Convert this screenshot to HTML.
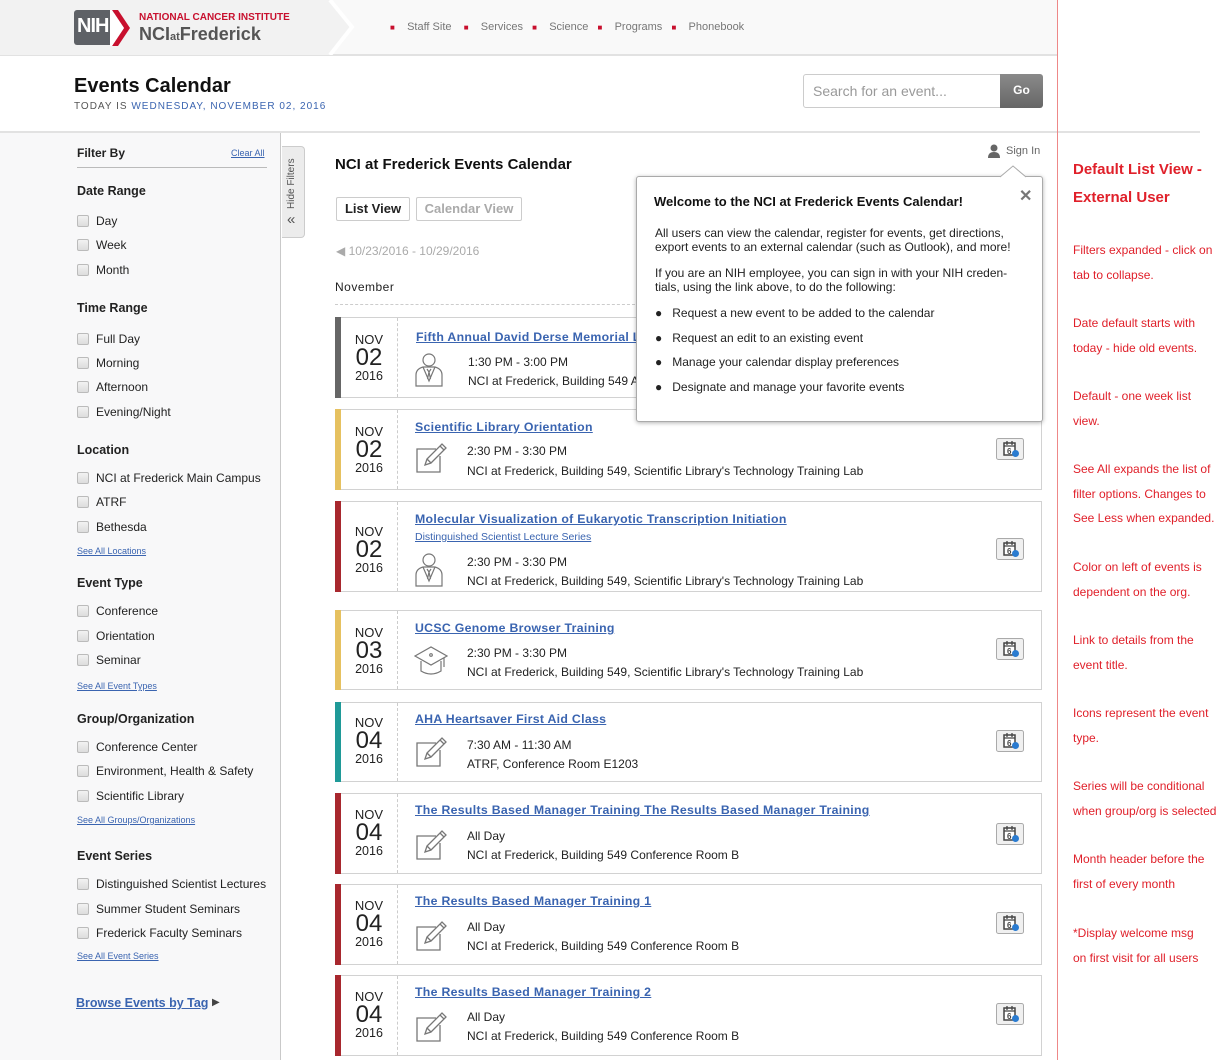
<!DOCTYPE html>
<html><head><meta charset="utf-8">
<style>
*{margin:0;padding:0;box-sizing:border-box}
body{width:1220px;height:1060px;overflow:hidden;background:#fff;font-family:"Liberation Sans",Arial,sans-serif;color:#222;position:relative}
.a{position:absolute;white-space:nowrap}
.sb{position:absolute;left:0;top:133px;width:281px;height:927px;background:#f8f8f9;border-right:1px solid #c9c9c9}
.h{font-size:12.5px;font-weight:bold;color:#222;left:77px;line-height:16px}
.cb{left:77px;width:12px;height:12px;border:1px solid #bbb;border-radius:2px;background:linear-gradient(#f2f2f2,#ddd)}
.cl{left:96px;font-size:12px;line-height:16px;color:#222}
.sa{left:77px;font-size:9px;color:#3a64b0;text-decoration:underline;line-height:12px}
.card{position:absolute;left:335px;width:707px;border:1px solid #d2d2d2;border-left:none;background:#fff}
.bar{position:absolute;left:0;top:-1px;bottom:-1px;width:6px}
.dt{position:absolute;left:6px;top:0;bottom:0;width:57px;border-right:1px dashed #ccc;text-align:center;color:#222}
.dt div:nth-child(2){font-size:24px!important;line-height:22px!important}
.ttl{font-size:12.3px;font-weight:bold;color:#3a64b0;text-decoration:underline;letter-spacing:.3px}
.tx{font-size:12px;color:#222}
.ic{position:absolute;left:79px}
.cal{position:absolute;left:661px;width:28px;height:22px}
.an{left:1073px;font-size:12px;color:#e0202a;line-height:24.5px}
</style></head><body>
<svg width="0" height="0" style="position:absolute">
<defs>
<symbol id="per" viewBox="0 0 30 34"><g fill="none" stroke="#777" stroke-width="1.2"><circle cx="15" cy="7" r="6"/><path d="M2 33V22q0-6 7-8h12q7 2 7 8v11z"/><path d="M9 14l6 14 6-14M13 16l2 3 2-3M15 19l-1.5 7M15 19l1.5 7"/></g></symbol>
<symbol id="edt" viewBox="0 0 34 32"><g fill="none" stroke="#777" stroke-width="1.3"><path d="M22 7H3v23h23V14"/><path d="M11 23l2-6 15-15 4 4-15 15z"/><path d="M13 17l4 4M26 4l4 4"/></g></symbol>
<symbol id="cap" viewBox="0 0 34 32"><g fill="none" stroke="#777" stroke-width="1.2"><path d="M1 12L17 3l16 9-16 9z"/><circle cx="17" cy="11" r="1.3"/><path d="M7 17v10q10 6 20 0V17"/><path d="M30 14v9"/></g></symbol>
<symbol id="cal" viewBox="0 0 28 22"><rect x="0.5" y="0.5" width="27" height="21" rx="2" fill="#f0f0f0" stroke="#aaa"/><rect x="8" y="5" width="11" height="12" fill="#fff" stroke="#444" stroke-width="1.5"/><path d="M8 8h11M11 3v4M16 3v4" stroke="#444" stroke-width="1.3"/><text x="11" y="16" font-size="8" font-family="Liberation Sans" font-weight="bold" fill="#444">6</text><circle cx="19.5" cy="15.5" r="3.5" fill="#2a7bd0"/></symbol>
</defs></svg>

<!-- header -->
<div class="a" style="left:0;top:0;width:1057px;height:56px;background:#f9f9f9;border-bottom:2px solid #e2e2e2"></div>
<svg class="a" style="left:0;top:0" width="360" height="55"><path d="M0 0H330L352 27 330 55H0z" fill="#f2f2f2"/><path d="M330 0L352 27 330 55" fill="none" stroke="#fff" stroke-width="4"/></svg>
<div class="a" style="left:74px;top:10px;width:40px;height:35px;background:#5e6166;border-radius:3px"></div>
<svg class="a" style="left:110px;top:8px" width="22" height="40"><path d="M2 2h6l12 18-12 18H2l12-18z" fill="#c8102e"/><path d="M0 2h2l12 18L2 38H0z" fill="#fff"/></svg>
<div class="a" style="left:77px;top:15px;font-size:20px;font-weight:bold;color:#fff;letter-spacing:-1px">NIH</div>
<div class="a" style="left:139px;top:12px;font-size:10px;font-weight:bold;color:#c8102e">NATIONAL CANCER INSTITUTE</div>
<div class="a" style="left:139px;top:24px;font-size:18px;font-weight:bold;color:#555">NCI<span style="font-size:11px">at</span>Frederick</div>
<div class="a" style="left:390px;top:21px;font-size:11px;color:#777">
<span style="color:#c8102e;font-size:8px">■</span>&nbsp;&nbsp;&nbsp; Staff Site &nbsp;&nbsp;&nbsp;<span style="color:#c8102e;font-size:8px">■</span>&nbsp;&nbsp;&nbsp; Services &nbsp;&nbsp;<span style="color:#c8102e;font-size:8px">■</span>&nbsp;&nbsp;&nbsp; Science &nbsp;&nbsp;<span style="color:#c8102e;font-size:8px">■</span>&nbsp;&nbsp;&nbsp; Programs &nbsp;&nbsp;<span style="color:#c8102e;font-size:8px">■</span>&nbsp;&nbsp;&nbsp; Phonebook</div>

<div class="a" style="left:74px;top:75px;font-size:20px;font-weight:bold;color:#111">Events Calendar</div>
<div class="a" style="left:74px;top:101px;font-size:10px;color:#555;letter-spacing:1px">TODAY IS <span style="color:#3a64b0">WEDNESDAY, NOVEMBER 02, 2016</span></div>
<div class="a" style="left:803px;top:74px;width:198px;height:34px;border:1px solid #ccc;border-radius:3px 0 0 3px;font-size:14px;color:#999;padding:8px 9px">Search for an event...</div>
<div class="a" style="left:1000px;top:74px;width:43px;height:34px;background:linear-gradient(#8a8a8a,#666);border-radius:0 3px 3px 0;color:#fff;font-size:12px;font-weight:bold;text-align:center;line-height:32px">Go</div>
<div class="a" style="left:0;top:131px;width:1200px;height:2px;background:#e2e2e2"></div>
<div class="a" style="left:1057px;top:0;width:1px;height:1060px;background:#e88"></div>

<!-- sidebar -->
<div class="sb"></div>
<div class="a h" style="left:77px;top:145px;font-size:12px">Filter By</div>
<div class="a" style="left:231px;top:148px;font-size:9px;color:#3a64b0;text-decoration:underline">Clear All</div>
<div class="a" style="left:77px;top:167px;width:190px;height:1px;background:#bbb"></div>
<div class="a h" style="top:183px">Date Range</div>
<div class="a cb" style="top:215px"></div><div class="a cl" style="top:213px">Day</div>
<div class="a cb" style="top:239px"></div><div class="a cl" style="top:237px">Week</div>
<div class="a cb" style="top:264px"></div><div class="a cl" style="top:262px">Month</div>
<div class="a h" style="top:300px">Time Range</div>
<div class="a cb" style="top:333px"></div><div class="a cl" style="top:331px">Full Day</div>
<div class="a cb" style="top:357px"></div><div class="a cl" style="top:355px">Morning</div>
<div class="a cb" style="top:381px"></div><div class="a cl" style="top:379px">Afternoon</div>
<div class="a cb" style="top:406px"></div><div class="a cl" style="top:404px">Evening/Night</div>
<div class="a h" style="top:442px">Location</div>
<div class="a cb" style="top:472px"></div><div class="a cl" style="top:470px">NCI at Frederick Main Campus</div>
<div class="a cb" style="top:496px"></div><div class="a cl" style="top:494px">ATRF</div>
<div class="a cb" style="top:521px"></div><div class="a cl" style="top:519px">Bethesda</div>
<div class="a sa" style="top:545px">See All Locations</div>
<div class="a h" style="top:575px">Event Type</div>
<div class="a cb" style="top:605px"></div><div class="a cl" style="top:603px">Conference</div>
<div class="a cb" style="top:630px"></div><div class="a cl" style="top:628px">Orientation</div>
<div class="a cb" style="top:654px"></div><div class="a cl" style="top:652px">Seminar</div>
<div class="a sa" style="top:680px">See All Event Types</div>
<div class="a h" style="top:711px">Group/Organization</div>
<div class="a cb" style="top:741px"></div><div class="a cl" style="top:739px">Conference Center</div>
<div class="a cb" style="top:765px"></div><div class="a cl" style="top:763px">Environment, Health &amp; Safety</div>
<div class="a cb" style="top:790px"></div><div class="a cl" style="top:788px">Scientific Library</div>
<div class="a sa" style="top:814px">See All Groups/Organizations</div>
<div class="a h" style="top:848px">Event Series</div>
<div class="a cb" style="top:878px"></div><div class="a cl" style="top:876px">Distinguished Scientist Lectures</div>
<div class="a cb" style="top:903px"></div><div class="a cl" style="top:901px">Summer Student Seminars</div>
<div class="a cb" style="top:927px"></div><div class="a cl" style="top:925px">Frederick Faculty Seminars</div>
<div class="a sa" style="top:950px">See All Event Series</div>
<div class="a" style="left:76px;top:996px;font-size:12.5px;font-weight:bold;color:#3a64b0;text-decoration:underline">Browse Events by Tag</div>
<div class="a" style="left:212px;top:997px;font-size:10px;color:#444">▶</div>
<!-- tab -->
<div class="a" style="left:282px;top:146px;width:23px;height:92px;background:#ececec;border:1px solid #ccc;border-left:none;border-radius:0 4px 4px 0"></div>
<div class="a" style="left:286px;top:209px;font-size:10px;color:#555;transform:rotate(-90deg);transform-origin:0 0">Hide Filters</div>
<div class="a" style="left:287px;top:211px;font-size:15px;color:#555">«</div>

<!-- main -->
<div class="a" style="left:335px;top:156px;font-size:15px;font-weight:bold;color:#111">NCI at Frederick Events Calendar</div>
<div class="a" style="left:336px;top:197px;width:74px;height:24px;border:1px solid #ccc;border-radius:2px;font-size:13px;font-weight:bold;text-align:center;line-height:22px">List View</div>
<div class="a" style="left:416px;top:197px;width:106px;height:24px;border:1px solid #ccc;border-radius:2px;font-size:13px;font-weight:bold;color:#aaa;text-align:center;line-height:22px">Calendar View</div>
<div class="a" style="left:336px;top:244px;font-size:12px;color:#aaa">◀ 10/23/2016 - 10/29/2016</div>
<div class="a" style="left:335px;top:280px;font-size:12px;color:#222;letter-spacing:.5px">November</div>
<div class="a" style="left:335px;top:304px;width:300px;border-top:1px dashed #ccc"></div>
<svg class="a" style="left:988px;top:144px" width="12" height="14"><circle cx="6" cy="4" r="3.5" fill="#666"/><path d="M0 14q0-6 6-6t6 6z" fill="#666"/></svg>
<div class="a" style="left:1006px;top:145px;font-size:11px;color:#666">Sign In</div>

<!-- cards -->
<div class="card" style="top:317px;height:81px"><div class="bar" style="background:#666"></div>
<div class="dt"><div style="font-size:13px;margin-top:14px">NOV</div><div>02</div><div style="font-size:12.5px">2016</div></div>
<div class="a ttl" style="left:81px;top:12px">Fifth Annual David Derse Memorial Lecture</div>
<svg class="ic" style="top:35px" width="30" height="34"><use href="#per"/></svg>
<div class="a tx" style="left:133px;top:37px">1:30 PM - 3:00 PM</div>
<div class="a tx" style="left:133px;top:56px">NCI at Frederick, Building 549 Auditorium</div></div>

<div class="card" style="top:409px;height:81px"><div class="bar" style="background:#e6c160"></div>
<div class="dt"><div style="font-size:13px;margin-top:14px">NOV</div><div>02</div><div style="font-size:12.5px">2016</div></div>
<div class="a ttl" style="left:80px;top:10px">Scientific Library Orientation</div>
<svg class="ic" style="top:32px" width="34" height="32"><use href="#edt"/></svg>
<div class="a tx" style="left:132px;top:34px">2:30 PM - 3:30 PM</div>
<div class="a tx" style="left:132px;top:54px">NCI at Frederick, Building 549, Scientific Library's Technology Training Lab</div>
<svg class="cal" style="top:28px"><use href="#cal"/></svg></div>

<div class="card" style="top:501px;height:91px"><div class="bar" style="background:#a8282e"></div>
<div class="dt"><div style="font-size:13px;margin-top:22px">NOV</div><div>02</div><div style="font-size:12.5px">2016</div></div>
<div class="a ttl" style="left:80px;top:10px">Molecular Visualization of Eukaryotic Transcription Initiation</div>
<div class="a" style="left:80px;top:29px;font-size:10.5px;color:#3a64b0;text-decoration:underline">Distinguished Scientist Lecture Series</div>
<svg class="ic" style="top:51px" width="30" height="34"><use href="#per"/></svg>
<div class="a tx" style="left:132px;top:53px">2:30 PM - 3:30 PM</div>
<div class="a tx" style="left:132px;top:72px">NCI at Frederick, Building 549, Scientific Library's Technology Training Lab</div>
<svg class="cal" style="top:36px"><use href="#cal"/></svg></div>

<div class="card" style="top:610px;height:80px"><div class="bar" style="background:#e6c160"></div>
<div class="dt"><div style="font-size:13px;margin-top:14px">NOV</div><div>03</div><div style="font-size:12.5px">2016</div></div>
<div class="a ttl" style="left:80px;top:10px">UCSC Genome Browser Training</div>
<svg class="ic" style="top:33px" width="34" height="32"><use href="#cap"/></svg>
<div class="a tx" style="left:132px;top:35px">2:30 PM - 3:30 PM</div>
<div class="a tx" style="left:132px;top:54px">NCI at Frederick, Building 549, Scientific Library's Technology Training Lab</div>
<svg class="cal" style="top:27px"><use href="#cal"/></svg></div>

<div class="card" style="top:702px;height:80px"><div class="bar" style="background:#1f9a98"></div>
<div class="dt"><div style="font-size:13px;margin-top:12px">NOV</div><div>04</div><div style="font-size:12.5px">2016</div></div>
<div class="a ttl" style="left:80px;top:9px">AHA Heartsaver First Aid Class</div>
<svg class="ic" style="top:33px" width="34" height="32"><use href="#edt"/></svg>
<div class="a tx" style="left:132px;top:35px">7:30 AM - 11:30 AM</div>
<div class="a tx" style="left:132px;top:54px">ATRF, Conference Room E1203</div>
<svg class="cal" style="top:27px"><use href="#cal"/></svg></div>

<div class="card" style="top:793px;height:81px"><div class="bar" style="background:#a8282e"></div>
<div class="dt"><div style="font-size:13px;margin-top:13px">NOV</div><div>04</div><div style="font-size:12.5px">2016</div></div>
<div class="a ttl" style="left:80px;top:9px">The Results Based Manager Training The Results Based Manager Training</div>
<svg class="ic" style="top:35px" width="34" height="32"><use href="#edt"/></svg>
<div class="a tx" style="left:132px;top:35px">All Day</div>
<div class="a tx" style="left:132px;top:54px">NCI at Frederick, Building 549 Conference Room B</div>
<svg class="cal" style="top:29px"><use href="#cal"/></svg></div>

<div class="card" style="top:884px;height:81px"><div class="bar" style="background:#a8282e"></div>
<div class="dt"><div style="font-size:13px;margin-top:13px">NOV</div><div>04</div><div style="font-size:12.5px">2016</div></div>
<div class="a ttl" style="left:80px;top:9px">The Results Based Manager Training 1</div>
<svg class="ic" style="top:35px" width="34" height="32"><use href="#edt"/></svg>
<div class="a tx" style="left:132px;top:35px">All Day</div>
<div class="a tx" style="left:132px;top:54px">NCI at Frederick, Building 549 Conference Room B</div>
<svg class="cal" style="top:27px"><use href="#cal"/></svg></div>

<div class="card" style="top:975px;height:81px"><div class="bar" style="background:#a8282e"></div>
<div class="dt"><div style="font-size:13px;margin-top:13px">NOV</div><div>04</div><div style="font-size:12.5px">2016</div></div>
<div class="a ttl" style="left:80px;top:9px">The Results Based Manager Training 2</div>
<svg class="ic" style="top:35px" width="34" height="32"><use href="#edt"/></svg>
<div class="a tx" style="left:132px;top:34px">All Day</div>
<div class="a tx" style="left:132px;top:53px">NCI at Frederick, Building 549 Conference Room B</div>
<svg class="cal" style="top:27px"><use href="#cal"/></svg></div>

<!-- popup -->
<div class="a" style="left:636px;top:176px;width:407px;height:246px;background:#fff;border:1px solid #aaa;border-radius:3px;box-shadow:0 1px 4px rgba(0,0,0,.3)"></div>
<svg class="a" style="left:1000px;top:165px" width="28" height="13"><path d="M0 12L13 1 26 12" fill="#fff" stroke="#aaa"/></svg>
<div class="a" style="left:1019px;top:186px;font-size:16px;font-weight:bold;color:#777">✕</div>
<div class="a" style="left:654px;top:194px;font-size:13px;font-weight:bold;color:#111">Welcome to the NCI at Frederick Events Calendar!</div>
<div class="a" style="left:655px;top:226px;font-size:12px;line-height:14px;color:#222">All users can view the calendar, register for events, get directions,<br>export events to an external calendar (such as Outlook), and more!</div>
<div class="a" style="left:655px;top:266px;font-size:12px;line-height:14px;color:#222">If you are an NIH employee, you can sign in with your NIH creden-<br>tials, using the link above, to do the following:</div>
<div class="a" style="left:655px;top:301px;font-size:12px;line-height:24.5px;color:#222">●&nbsp;&nbsp; Request a new event to be added to the calendar<br>●&nbsp;&nbsp; Request an edit to an existing event<br>●&nbsp;&nbsp; Manage your calendar display preferences<br>●&nbsp;&nbsp; Designate and manage your favorite events</div>

<!-- annotations -->
<div class="a" style="left:1073px;top:156px;font-size:15px;font-weight:bold;color:#e0202a;line-height:28px">Default List View -<br>External User</div>
<div class="a an" style="top:238px">Filters expanded - click on<br>tab to collapse.</div>
<div class="a an" style="top:311px">Date default starts with<br>today - hide old events.</div>
<div class="a an" style="top:384px">Default - one week list<br>view.</div>
<div class="a an" style="top:457px">See All expands the list of<br>filter options. Changes to<br>See Less when expanded.</div>
<div class="a an" style="top:555px">Color on left of events is<br>dependent on the org.</div>
<div class="a an" style="top:628px">Link to details from the<br>event title.</div>
<div class="a an" style="top:701px">Icons represent the event<br>type.</div>
<div class="a an" style="top:774px">Series will be conditional<br>when group/org is selected</div>
<div class="a an" style="top:847px">Month header before the<br>first of every month</div>
<div class="a an" style="top:921px">*Display welcome msg<br>on first visit for all users</div>
</body></html>
